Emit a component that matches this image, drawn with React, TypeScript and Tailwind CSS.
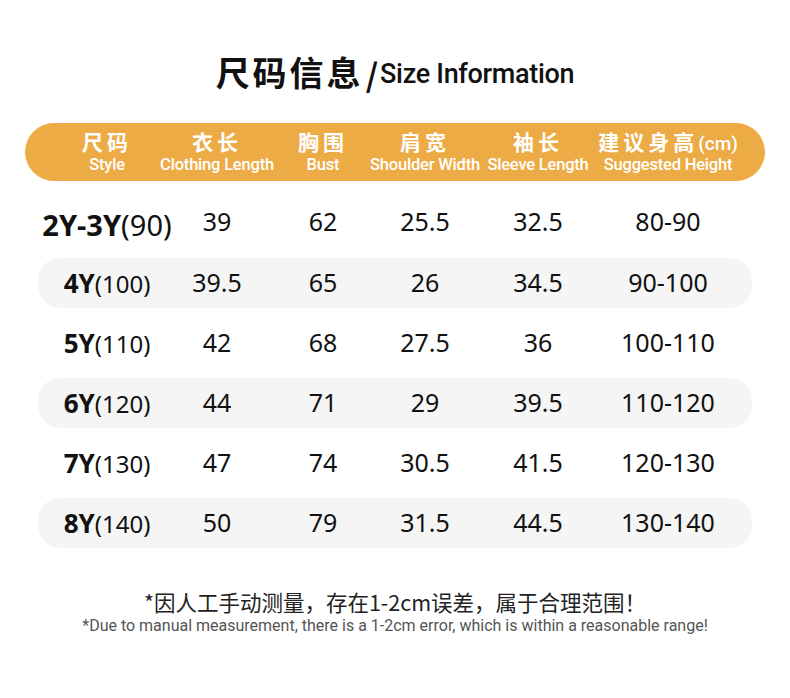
import React from 'react';

type Row = {
  size: string;
  height: string;
  cells: string[];
};

const rows: Row[] = [
  { size: '2Y-3Y', height: '(90)', cells: ['39', '62', '25.5', '32.5', '80-90'] },
  { size: '4Y', height: '(100)', cells: ['39.5', '65', '26', '34.5', '90-100'] },
  { size: '5Y', height: '(110)', cells: ['42', '68', '27.5', '36', '100-110'] },
  { size: '6Y', height: '(120)', cells: ['44', '71', '29', '39.5', '110-120'] },
  { size: '7Y', height: '(130)', cells: ['47', '74', '30.5', '41.5', '120-130'] },
  { size: '8Y', height: '(140)', cells: ['50', '79', '31.5', '44.5', '130-140'] },
];

const heads = [
  { zh: '尺码', en: 'Style' },
  { zh: '衣长', en: 'Clothing Length' },
  { zh: '胸围', en: 'Bust' },
  { zh: '肩宽', en: 'Shoulder Width' },
  { zh: '袖长', en: 'Sleeve Length' },
  { zh: '建议身高', en: 'Suggested Height', unit: '(cm)' },
];

const cols = 'grid grid-cols-[110px_110px_102px_102px_124px_136px]';
const cjk = "font-['Noto_Sans_CJK_SC',sans-serif]";
const num = "font-['Noto_Sans','Open_Sans',sans-serif]";

function Cell({ children }: { children: React.ReactNode }) {
  return <div className="flex justify-center items-baseline whitespace-nowrap">{children}</div>;
}

export default function App() {
  return (
    <div className="w-[790px] h-[698px] bg-white flex flex-col items-center text-[#111]">
      <h1 className="mt-[37px] h-[52px] flex items-end">
        <span className={`${cjk} text-[34px] font-bold tracking-[3px] leading-none`}>尺码信息</span>
        <span className={`${cjk} text-[32px] font-bold leading-none mx-[2px]`}>/</span>
        <span className="font-['Roboto',sans-serif] text-[27px] font-medium leading-none pb-[1px] tracking-[-0.3px]">Size Information</span>
      </h1>

      <div className="mt-[34px] w-[740px] h-[58px] rounded-full bg-[#EDAB46] text-white pl-[27px] pt-[5px] flex items-start overflow-hidden">
        <div className={cols}>
          {heads.map((h) => (
            <div key={h.en} className="flex flex-col items-center whitespace-nowrap">
              <div className="flex items-baseline h-[26px]">
                <span className={`${cjk} text-[21px] font-bold tracking-[4px] leading-[26px]`}>{h.zh}</span>
                {h.unit && <span className="font-['Roboto',sans-serif] text-[19px] font-medium leading-[26px]">{h.unit}</span>}
              </div>
              <span className="mt-[2px] font-['Roboto',sans-serif] text-[16.5px] font-medium leading-[18px] tracking-[-0.2px]">{h.en}</span>
            </div>
          ))}
        </div>
      </div>

      <div className="mt-[17px] w-[714px] flex flex-col gap-[10px]">
        {rows.map((r, i) => (
          <div
            key={r.size}
            className={`h-[50px] pl-[14px] flex items-center rounded-[22px] ${i % 2 === 1 ? 'bg-[#F5F5F5]' : ''}`}
          >
            <div className={`${cols} ${num} text-[25px] w-full ${i === 0 ? 'pt-[3px]' : ''}`}>
              <Cell>
                <span className={`font-bold ${i === 0 ? 'text-[29px]' : 'text-[26px]'}`}>{r.size}</span>
                <span className={i === 0 ? 'text-[29px]' : 'text-[24px]'}>{r.height}</span>
              </Cell>
              {r.cells.map((c, j) => (
                <Cell key={j}>{c}</Cell>
              ))}
            </div>
          </div>
        ))}
      </div>

      <p className={`mt-[40px] ${cjk} text-[21.5px] text-[#222] leading-[28px]`}>
        *因人工手动测量，存在1-2cm误差，属于合理范围！
      </p>
      <p className="font-['Roboto',sans-serif] text-[16px] text-[#555] leading-[18px] mt-[1px]">
        *Due to manual measurement, there is a 1-2cm error, which is within a reasonable range!
      </p>
    </div>
  );
}
